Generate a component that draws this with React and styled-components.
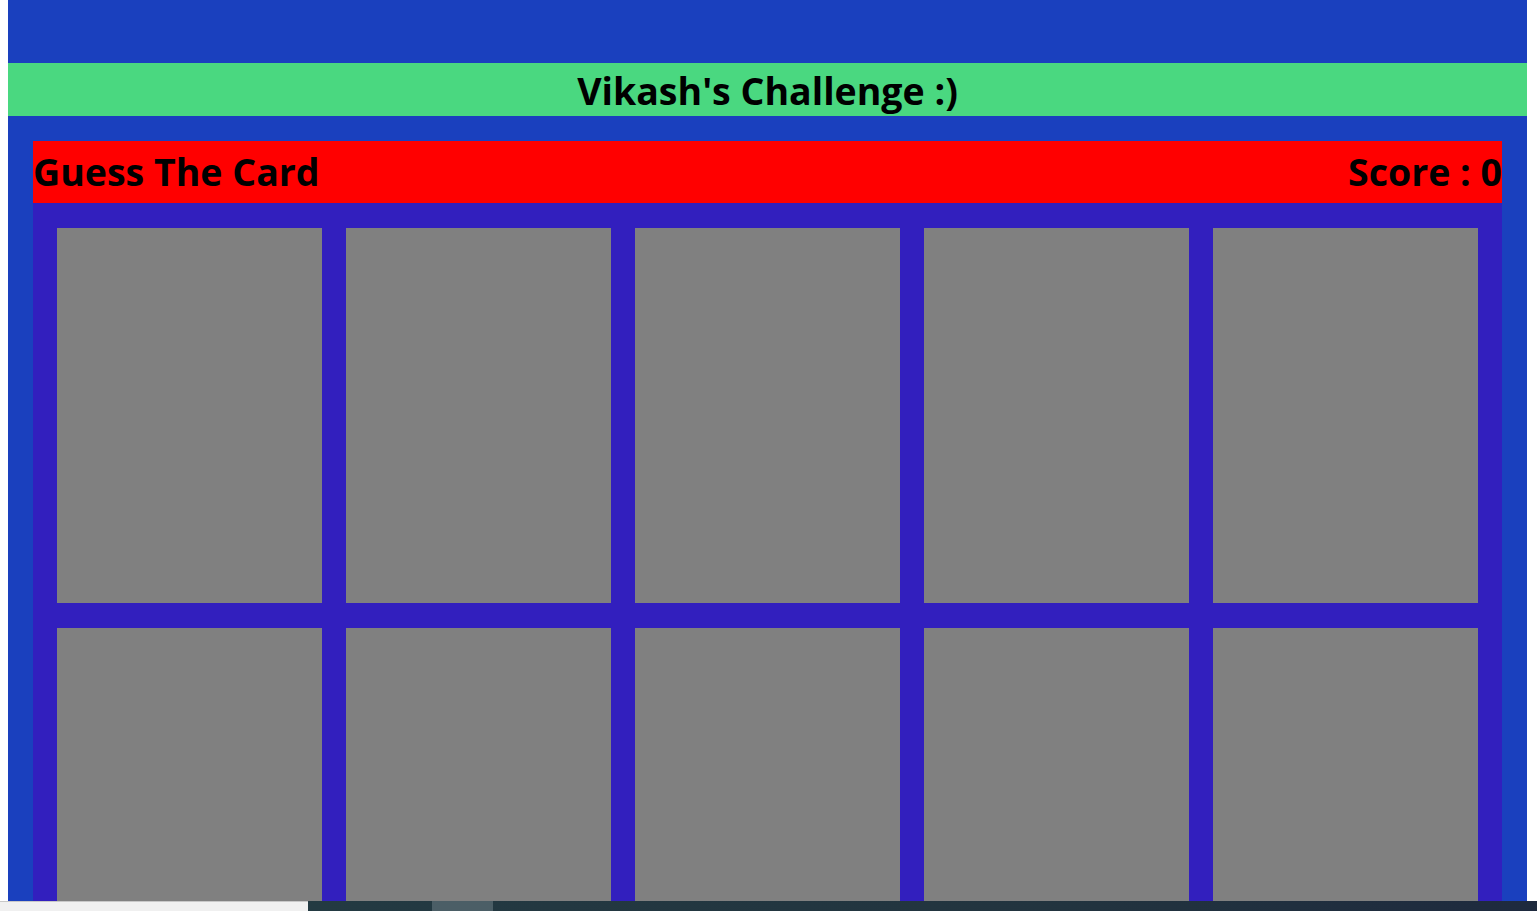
import React from "react";
import styled, { createGlobalStyle } from "styled-components";

const GlobalStyle = createGlobalStyle`
    html, body {
        margin: 0;
        padding: 0;
        background: #ffffff;
        overflow: hidden;
    }
    body {
        margin: 0 10px 0 8px;
        font-family: "Open Sans", "Noto Sans", sans-serif;
    }
`;

const Page = styled.div`
    background-color: #1a40be;
    padding-top: 63px;
    padding-bottom: 25px;
`;

const Banner = styled.h1`
    margin: 0;
    height: 53px;
    background-color: #4ad880;
    color: #000;
    font-size: 37.5px;
    font-weight: 700;
    line-height: 56px;
    text-align: center;
`;

const Game = styled.div`
    margin: 25px 25px 0 25px;
`;

const GameHeader = styled.div`
    display: flex;
    justify-content: space-between;
    align-items: center;
    height: 62px;
    background-color: #ff0000;
`;

const GameTitle = styled.h2`
    margin: 0;
    font-size: 37.5px;
    font-weight: 700;
    line-height: 1;
    color: #000;
`;

const CardGrid = styled.div`
    display: grid;
    grid-template-columns: repeat(5, 1fr);
    column-gap: 24px;
    row-gap: 25px;
    padding: 25px 24px;
    background-color: #321fbe;
`;

const Card = styled.div`
    height: 375px;
    background-color: #808080;
`;

const TaskStrip = styled.div`
    position: fixed;
    left: 0;
    right: 0;
    bottom: 0;
    height: 10px;
    display: flex;
`;

const StripLight = styled.div`
    width: 308px;
    background: #f0f0f0;
    border-top: 1px solid #c8c8c8;
`;

const StripDark = styled.div`
    flex: 1;
    display: flex;
    background: linear-gradient(90deg, #233a42 0%, #22343f 60%, #1e2a3e 100%);
`;

const StripSpot = styled.div`
    margin-left: 124px;
    width: 61px;
    background: #4b5e66;
`;

const App = () => {
    const cards = Array.from({ length: 10 }, (_, i) => i);
    return (
        <>
            <GlobalStyle />
            <Page>
                <Banner>Vikash's Challenge :)</Banner>
                <Game>
                    <GameHeader>
                        <GameTitle>Guess The Card</GameTitle>
                        <GameTitle>Score : 0</GameTitle>
                    </GameHeader>
                    <CardGrid>
                        {cards.map((c) => (
                            <Card key={c} />
                        ))}
                    </CardGrid>
                </Game>
            </Page>
            <TaskStrip>
                <StripLight />
                <StripDark>
                    <StripSpot />
                </StripDark>
            </TaskStrip>
        </>
    );
};

export default App;
